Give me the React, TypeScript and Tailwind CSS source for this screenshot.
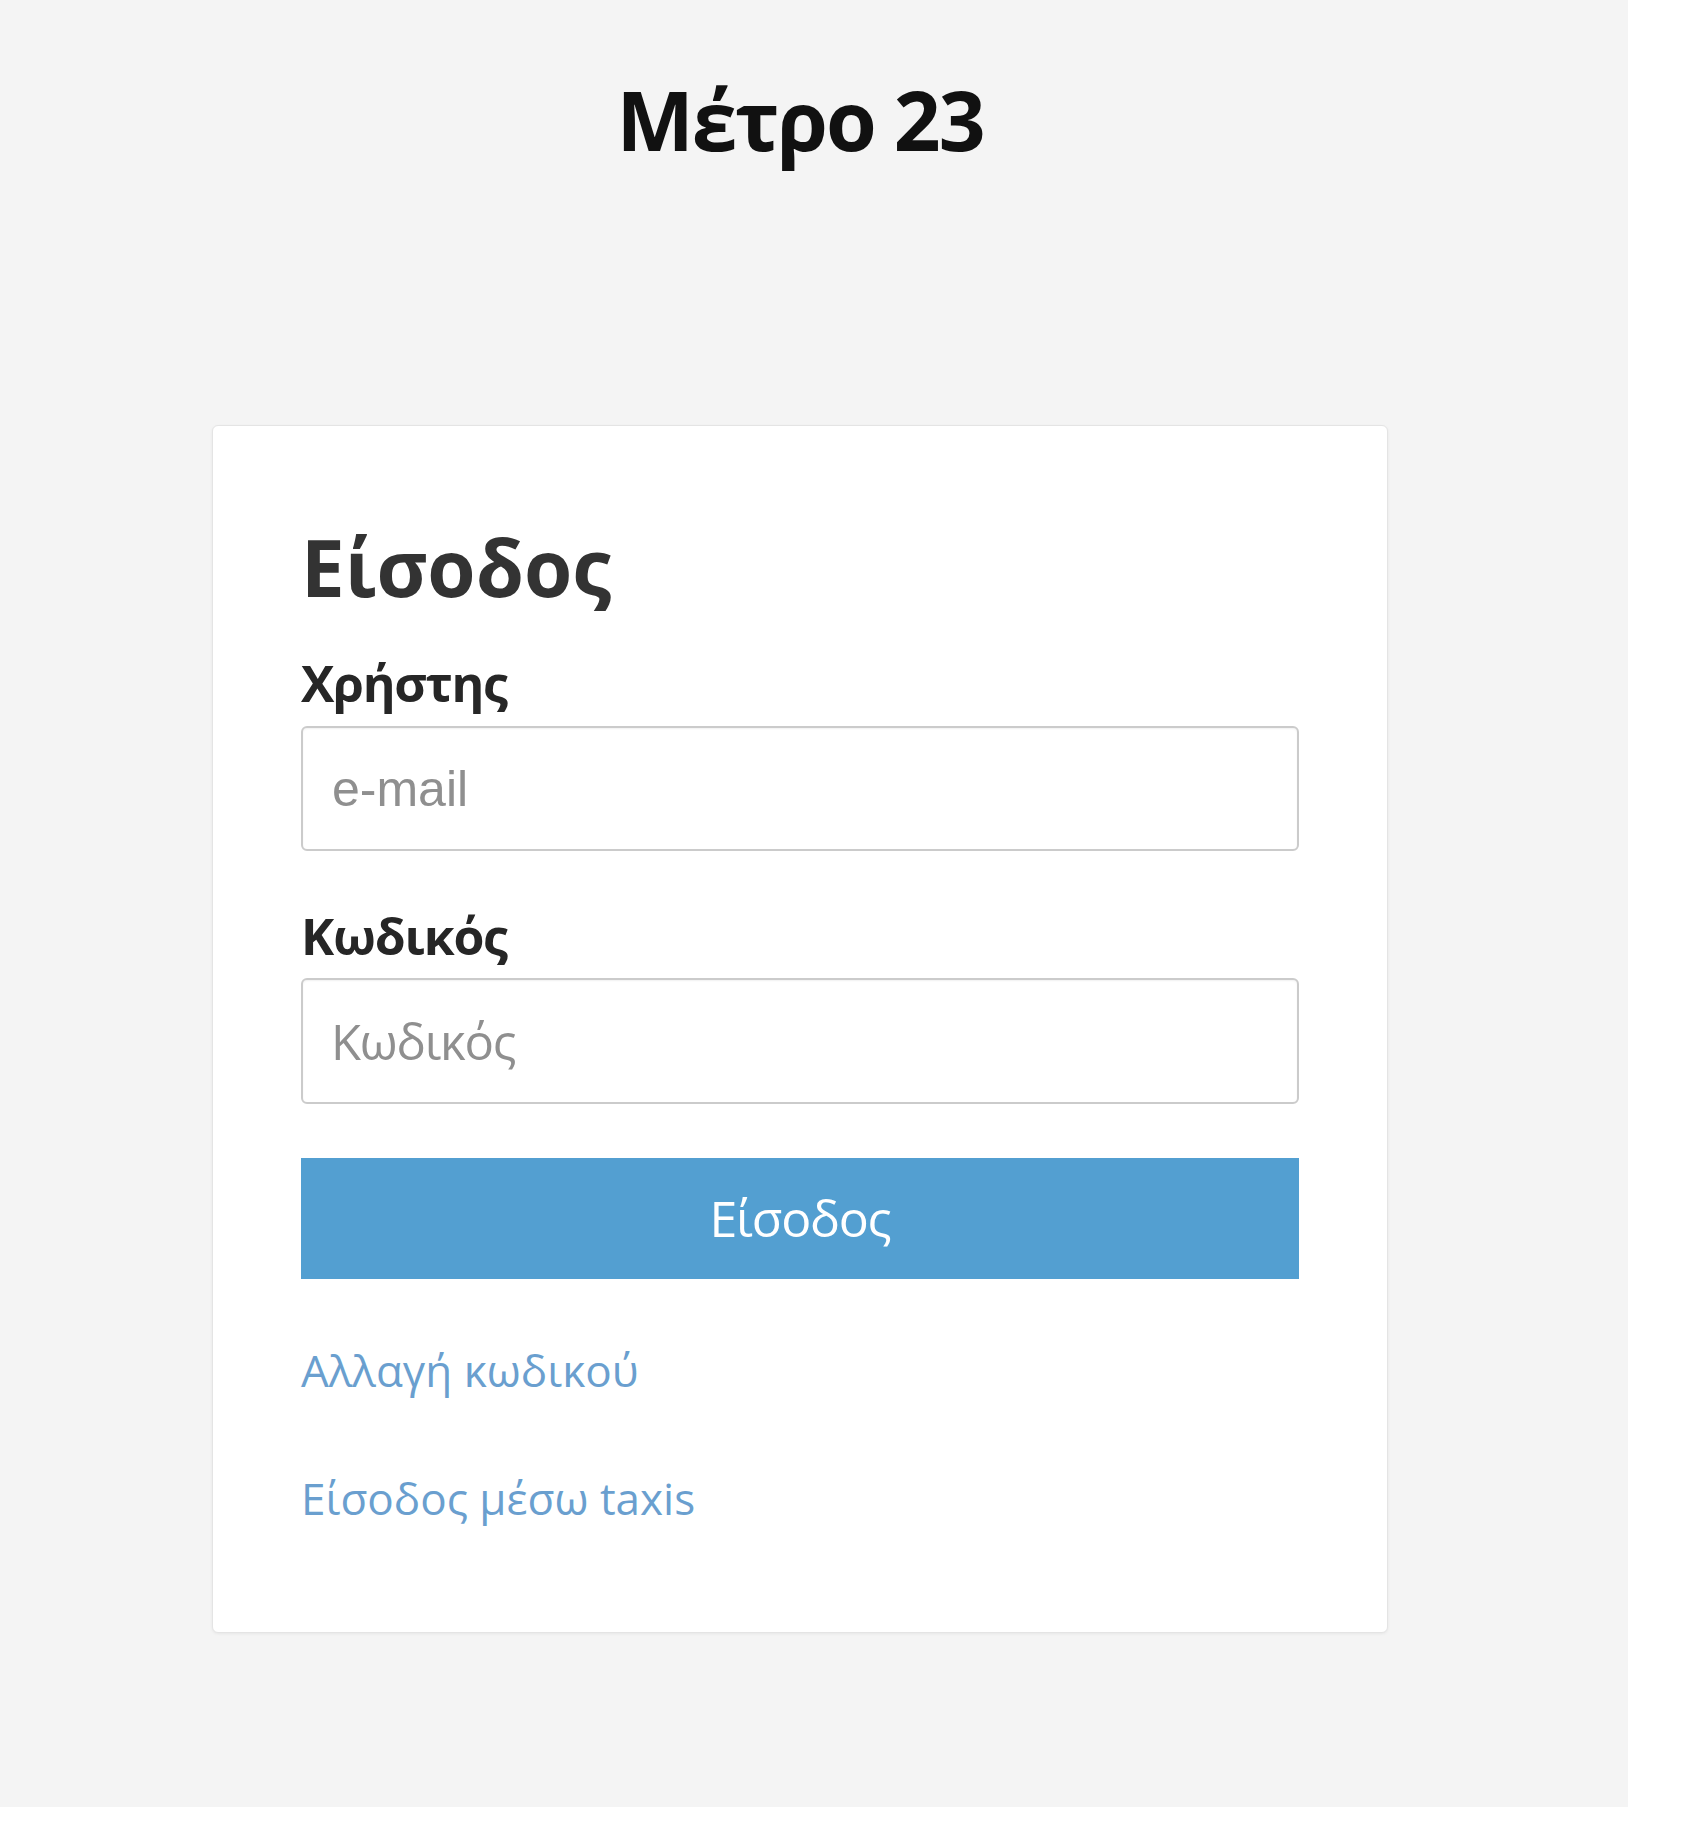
export default function App() {
  return (
    <div className="w-[1700px] h-[1830px] bg-white">
      <div className="w-[1628px] h-[1807px] bg-[#f4f4f4] font-['Open_Sans',sans-serif]">
        <div className="w-[1600px] flex flex-col items-center">
          <h1 className="mt-[78px] text-[82px] leading-none font-bold text-[#111] tracking-tight">Μέτρο 23</h1>

          {/* login card */}
          <div className="mt-[265px] w-[1176px] h-[1208px] bg-white border border-[#e4e4e4] rounded-[6px] shadow-[0_1px_3px_rgba(0,0,0,0.06)] px-[88px] pt-[102px]">
            <h2 className="text-[78px] leading-none font-bold text-[#333]">Είσοδος</h2>

            <label className="block mt-[52px] text-[50px] leading-none font-bold text-[#262626] tracking-tight">Χρήστης</label>
            <input
              type="email"
              placeholder="e-mail"
              className="block mt-[18px] w-full h-[125px] border-2 border-[#cbcbcb] rounded-[6px] bg-white px-[29px] text-[50px] font-['Liberation_Sans',Arial,sans-serif] placeholder:text-[#8f8f8f] shadow-[inset_0_1px_2px_rgba(0,0,0,0.06)] outline-none"
            />

            <label className="block mt-[60px] text-[50px] leading-none font-bold text-[#262626] tracking-tight">Κωδικός</label>
            <input
              type="password"
              placeholder="Κωδικός"
              className="block mt-[17px] w-full h-[126px] border-2 border-[#cbcbcb] rounded-[6px] bg-white px-[28px] text-[49px] tracking-tight placeholder:text-[#8f8f8f] shadow-[inset_0_1px_2px_rgba(0,0,0,0.06)] outline-none"
            />

            <button className="block mt-[54px] w-full h-[121px] bg-[#539fd1] text-white text-[50px] tracking-tight">
              Είσοδος
            </button>

            <a href="#" className="block w-fit mt-[69px] text-[44px] leading-none text-[#6a9fcf]">Αλλαγή κωδικού</a>
            <a href="#" className="block w-fit mt-[84px] text-[44px] leading-none text-[#6a9fcf]">Είσοδος μέσω taxis</a>
          </div>
        </div>
      </div>
    </div>
  )
}
